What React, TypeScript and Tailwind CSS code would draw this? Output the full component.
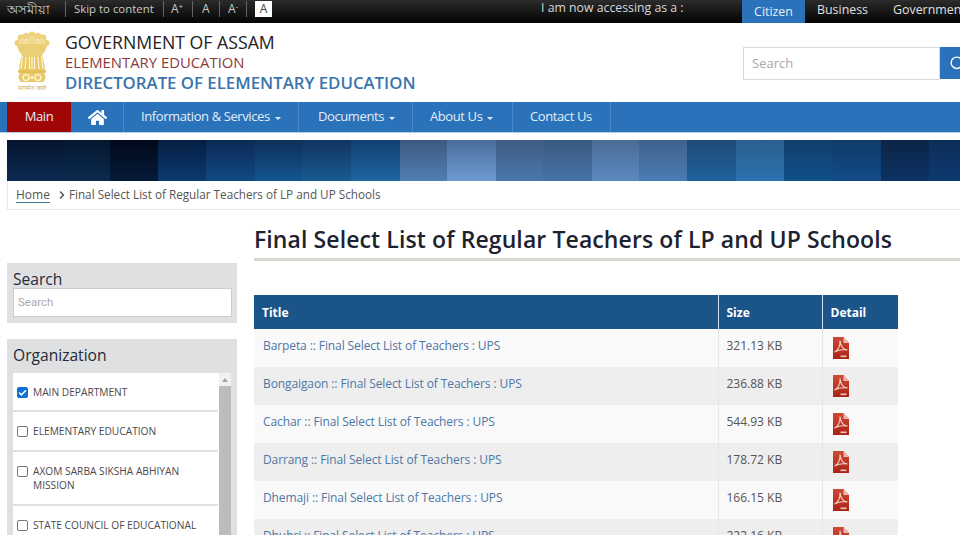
import { Search as SearchIcon, ChevronRight, Check } from "lucide-react";
import { FaHome } from "react-icons/fa";

const banner = [
  "w-[56px] from-[#05142e] to-[#0a2a52]",
  "w-[47px] from-[#05182f] to-[#0a2a50]",
  "w-[48px] from-[#020a1c] to-[#051a38]",
  "w-[48px] from-[#061f42] to-[#0c3a70]",
  "w-[49px] from-[#0a2a54] to-[#114a85]",
  "w-[47px] from-[#0d3058] to-[#155592]",
  "w-[49px] from-[#10345f] to-[#1a5a94]",
  "w-[49px] from-[#123f70] to-[#1f66a2]",
  "w-[47px] from-[#3c5a80] to-[#4f7fb5]",
  "w-[49px] from-[#4a6e9c] to-[#6f9bd3]",
  "w-[47px] from-[#3e5c82] to-[#4a78ae]",
  "w-[49px] from-[#3a5a80] to-[#4472a8]",
  "w-[47px] from-[#4a6c96] to-[#5b89c0]",
  "w-[48px] from-[#3f628c] to-[#4a7cb4]",
  "w-[49px] from-[#1f4a74] to-[#1d619f]",
  "w-[48px] from-[#2c5f8e] to-[#2a72b2]",
  "w-[49px] from-[#113f6b] to-[#11508a]",
  "w-[48px] from-[#0f3a6a] to-[#134a88]",
  "w-[48px] from-[#0b2445] to-[#0d3364]",
  "w-[31px] from-[#0c2d58] to-[#0c3a70]",
];

const rows = [
  ["Barpeta :: Final Select List of Teachers : UPS", "321.13 KB"],
  ["Bongaigaon :: Final Select List of Teachers : UPS", "236.88 KB"],
  ["Cachar :: Final Select List of Teachers : UPS", "544.93 KB"],
  ["Darrang :: Final Select List of Teachers : UPS", "178.72 KB"],
  ["Dhemaji :: Final Select List of Teachers : UPS", "166.15 KB"],
  ["Dhubri :: Final Select List of Teachers : UPS", "222.16 KB"],
];

function Pdf() {
  return (
    <svg width="16" height="22" viewBox="0 0 16 22" className="block">
      <defs>
        <linearGradient id="pdfg" x1="0" y1="0" x2="0" y2="1">
          <stop offset="0" stopColor="#cf4a35" />
          <stop offset="1" stopColor="#a92415" />
        </linearGradient>
      </defs>
      <path d="M0 0H10.5L16 6V22H0Z" fill="url(#pdfg)" />
      <path d="M10.5 0L16 6H10.5Z" fill="#ecb8ae" />
      <path d="M1.5 15C5 13.5 7.5 9 7 3.5C7.5 9 10.5 12.5 14.5 13C10.5 12.5 5 13 1.5 15Z" fill="none" stroke="#f3d3cc" strokeWidth="1.1" />
      <rect x="7.5" y="18.5" width="6" height="1.6" fill="#eec4bc" />
    </svg>
  );
}

function Emblem() {
  return (
    <svg width="36" height="62" viewBox="0 0 36 62" className="block">
      <g fill="#edd27e">
        <circle cx="18" cy="4" r="3.6" />
        <circle cx="12" cy="5" r="3.2" />
        <circle cx="24" cy="5" r="3.2" />
        <circle cx="7" cy="7" r="3.4" />
        <circle cx="29" cy="7" r="3.4" />
        <circle cx="3.5" cy="12" r="3" />
        <circle cx="32.5" cy="12" r="3" />
        <circle cx="18" cy="10" r="5" fill="#f0d98f" />
        <circle cx="9" cy="12" r="4.5" fill="#f2dc96" />
        <circle cx="27" cy="12" r="4.5" fill="#f2dc96" />
        <path d="M2 13H34L31 20L27 26H9L5 20Z" fill="#ebcf76" />
        <path d="M7 26H29L31 39H5Z" fill="#e8c965" />
        <path d="M8.5 26L7 38M12 26L11 38M15.5 26V38M18 26V38M20.5 26V38M24 26L25 38M27.5 26L29 38" stroke="#fff4d2" strokeWidth="1.2" fill="none" />
        <rect x="4" y="39" width="28" height="3" rx="1" fill="#e3c05a" />
        <path d="M6 42H30C32 44 32 49 29 51H7C4 49 4 44 6 42Z" fill="#e9ca68" />
        <circle cx="12" cy="46.5" r="3" fill="none" stroke="#fff4d2" strokeWidth="1.3" />
        <circle cx="24" cy="46.5" r="3" fill="none" stroke="#fff4d2" strokeWidth="1.3" />
        <circle cx="18" cy="46.5" r="1.5" fill="#fff4d2" />
      </g>
      <text x="18" y="59" textAnchor="middle" fontSize="6" fill="#cdb36a">सत्यमेव जयते</text>
    </svg>
  );
}

function Check2({ checked, label, first }: { checked?: boolean; label: string; first?: boolean }) {
  return (
    <div className={`flex gap-[5px] border-b-2 border-[#dfe0e2] pl-[4px] pr-[5px] leading-[14px] pt-[12px] ${first ? "pb-[11px]" : "pb-[12px]"}`}>
      <span
        className={`mt-[2px] flex h-[11px] w-[11px] shrink-0 items-center justify-center rounded-[2px] border ${
          checked ? "border-[#0f6fd8] bg-[#0f6fd8]" : "border-[#767676] bg-white"
        }`}
      >
        {checked && <Check size={10} strokeWidth={4} className="text-white" />}
      </span>
      <span className="text-[10.2px] text-[#4a4a4a]">{label}</span>
    </div>
  );
}

function Caret() {
  return <span className="ml-[5px] mt-[2px] h-0 w-0 border-x-[3px] border-t-[3px] border-x-transparent border-t-[#e4edf6]" />;
}

export default function App() {
  return (
    <div className="h-[535px] w-[960px] overflow-hidden bg-white font-['Open_Sans',sans-serif] text-[#333]">
      {/* top bar */}
      <div className="flex h-[23px] items-start overflow-hidden whitespace-nowrap bg-gradient-to-b from-[#2c2c2c] to-[#050505] text-[12px] leading-[16px] text-[#c9c9c9]">
        <span className="mt-[1px] h-[16px] w-[66px] shrink-0 border-r border-[#666] pl-[7px] text-[13px]">অসমীয়া</span>
        <span className="mt-[1px] h-[16px] w-[98px] shrink-0 border-r border-[#666] pl-[8px] text-[11.4px]">Skip to content</span>
        <span className="mt-[1px] h-[16px] w-[29px] shrink-0 border-r border-[#666] pl-[7px]">A<sup className="text-[8px]">+</sup></span>
        <span className="mt-[1px] h-[16px] w-[27px] shrink-0 border-r border-[#666] pl-[9px]">A</span>
        <span className="mt-[1px] h-[16px] w-[27px] shrink-0 border-r border-[#666] pl-[8px]">A<sup className="text-[8px]">-</sup></span>
        <span className="ml-[8px] mt-[1px] flex h-[16px] w-[17px] shrink-0 items-center justify-center bg-white text-[#444]">A</span>
        <span className="ml-[269px] w-[201px] shrink-0 text-[12.3px] text-[#d8d8d8]">I am now accessing as a :</span>
        <span className="flex h-[23px] w-[63px] shrink-0 items-center justify-center bg-[#2a72b9] text-[12.4px] text-[#e6eef6]">Citizen</span>
        <span className="ml-[12px] mt-[2px] shrink-0 text-[12.4px] text-[#e0e0e0]">Business</span>
        <span className="ml-[25px] mt-[2px] shrink-0 text-[12.4px] text-[#e0e0e0]">Government</span>
      </div>

      {/* header */}
      <div className="flex h-[79px] items-start">
        <div className="ml-[14px] mt-[8px]"><Emblem /></div>
        <div className="ml-[15px] mt-[8px]">
          <div className="text-[17.7px] leading-[22px] text-[#222]">GOVERNMENT OF ASSAM</div>
          <div className="text-[14.85px] leading-[19px] text-[#8a3a3a]">ELEMENTARY EDUCATION</div>
          <div className="text-[16.8px] font-semibold leading-[21px] text-[#3a74ad]">DIRECTORATE OF ELEMENTARY EDUCATION</div>
        </div>
        <div className="ml-auto mt-[24px] flex">
          <div className="flex h-[33px] w-[197px] items-center border border-[#d9d9d9] px-[8px] text-[13px] text-[#a8a8a8]">Search</div>
          <div className="flex h-[32px] w-[20px] items-center overflow-hidden bg-[#2a72b9] pl-[9px]">
            <SearchIcon size={17} className="shrink-0 text-white" />
          </div>
        </div>
      </div>

      {/* nav */}
      <div className="flex h-[31px] border-b border-[#a9d4ee] bg-[#2a72b9] pl-[7px] text-[13px] tracking-[-0.4px] text-[#e4edf6]">
        <div className="flex w-[64px] items-center justify-center bg-[#a00606]">Main</div>
        <div className="flex w-[53px] items-center justify-center border-r border-[#4b8ac8]"><FaHome size={19} className="text-white" /></div>
        <div className="flex w-[175px] items-center border-r border-[#4b8ac8] pl-[17px]">Information &amp; Services<Caret /></div>
        <div className="flex w-[114px] items-center border-r border-[#4b8ac8] pl-[19px]">Documents<Caret /></div>
        <div className="flex w-[100px] items-center border-r border-[#4b8ac8] pl-[17px]">About Us<Caret /></div>
        <div className="flex w-[98px] items-center border-r border-[#4b8ac8] pl-[17px]">Contact Us</div>
      </div>

      {/* banner */}
      <div className="ml-[7px] mt-[7px] flex h-[41px] overflow-hidden">
        {banner.map((c, i) => (
          <div key={i} className={`h-full shrink-0 bg-gradient-to-b ${c}`} />
        ))}
      </div>

      {/* breadcrumb */}
      <div className="ml-[7px] flex h-[29px] items-center border-b border-l border-[#e8e8e8] pl-[8px] text-[11.72px] text-[#555]">
        <span className="border-b border-[#3c7d8c] text-[12px] leading-[15px]">Home</span>
        <ChevronRight size={12} strokeWidth={3} className="ml-[6px] mr-[1px] text-[#555]" />
        <span>Final Select List of Regular Teachers of LP and UP Schools</span>
      </div>

      <div className="flex items-start">
        {/* sidebar */}
        <div className="ml-[7px] mt-[53px] w-[230px]">
          <div className="h-[60px] bg-[#dfe0e2] pl-[6px] pr-[5px] pt-[7px]">
            <div className="text-[15.6px] font-medium leading-[18px] text-[#222b3a]">Search</div>
            <div className="flex h-[29px] items-center border border-[#ccc] bg-white px-[4px] font-['Roboto',sans-serif] text-[11.5px] text-[#aaa]">Search</div>
          </div>
          <div className="mt-[16px] h-[300px] bg-[#dfe0e2] px-[6px] pt-[4px]">
            <div className="text-[15.6px] font-medium leading-[24px] text-[#222b3a]">Organization</div>
            <div className="mt-[6px] flex h-[300px] bg-white">
              <div className="w-[205px]">
                <Check2 first checked label="MAIN DEPARTMENT" />
                <Check2 label="ELEMENTARY EDUCATION" />
                <Check2 label="AXOM SARBA SIKSHA ABHIYAN MISSION" />
                <Check2 label="STATE COUNCIL OF EDUCATIONAL RESEARCH AND TRAINING" />
              </div>
              <div className="ml-[1px] w-[12px] bg-[#f1f1f1]">
                <div className="mx-auto mt-[5px] h-0 w-0 border-x-[3px] border-b-[4px] border-x-transparent border-b-[#a3a3a3]" />
                <div className="mt-[4px] h-full bg-[#bcbcbc]" />
              </div>
            </div>
          </div>
        </div>

        {/* main */}
        <div className="ml-[17px] flex-1">
          <h1 className="mt-[15px] h-[33px] whitespace-nowrap text-[23px] font-semibold leading-[28px] tracking-[0.1px] text-[#1d2230]">
            Final Select List of Regular Teachers of LP and UP Schools
          </h1>
          <div className="h-[3px] bg-[#d6d5d0]" />
          <table className="mt-[34px] w-[644px] table-fixed border-collapse text-[12px]">
            <thead>
              <tr className="h-[34px] bg-[#1b5488] text-left font-bold text-white">
                <th className="w-[464px] border-r border-[#cfe0ee] pl-[8px] pt-[1px]">Title</th>
                <th className="w-[104px] border-r border-[#cfe0ee] pl-[8px] pt-[1px]">Size</th>
                <th className="pl-[8px] pt-[1px]">Detail</th>
              </tr>
            </thead>
            <tbody>
              {rows.map((r, i) => (
                <tr key={r[0]} className={`h-[38px] ${i % 2 ? "bg-[#eeeeee]" : "bg-[#f9f9f9]"}`}>
                  <td className="border-r border-[#e6e6e6] pb-[5px] pl-[9px] tracking-[-0.1px] text-[#4d77a5]">{r[0]}</td>
                  <td className="border-r border-[#e6e6e6] pb-[5px] pl-[8px] text-[#555]">{r[1]}</td>
                  <td className="pl-[10px]"><Pdf /></td>
                </tr>
              ))}
            </tbody>
          </table>
        </div>
      </div>
    </div>
  );
}
